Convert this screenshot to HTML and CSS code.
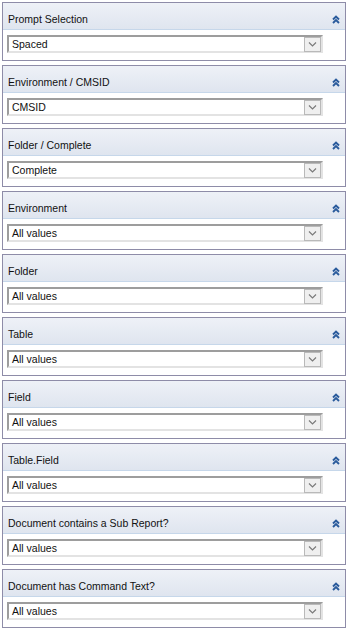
FILE: index.html
```html
<!DOCTYPE html>
<html lang="en">
<head>
  <meta charset="UTF-8">
  <title>Prompts</title>
  <link rel="stylesheet" href="styles.css">
</head>
<body>
  <div class="prompts">
    <div class="panel">
      <div class="panel-head"><span>Prompt Selection</span><svg class="collapse" viewBox="0 0 8 9"><path d="M1 4.5 L4 1.5 L7 4.5 M1 8 L4 5 L7 8"/></svg></div>
      <div class="panel-body"><div class="combo"><span>Spaced</span><i class="drop"><svg viewBox="0 0 9 5"><path d="M1 0.5 L4.5 4 L8 0.5"/></svg></i></div></div>
    </div>
    <div class="panel">
      <div class="panel-head"><span>Environment / CMSID</span><svg class="collapse" viewBox="0 0 8 9"><path d="M1 4.5 L4 1.5 L7 4.5 M1 8 L4 5 L7 8"/></svg></div>
      <div class="panel-body"><div class="combo"><span>CMSID</span><i class="drop"><svg viewBox="0 0 9 5"><path d="M1 0.5 L4.5 4 L8 0.5"/></svg></i></div></div>
    </div>
    <div class="panel">
      <div class="panel-head"><span>Folder / Complete</span><svg class="collapse" viewBox="0 0 8 9"><path d="M1 4.5 L4 1.5 L7 4.5 M1 8 L4 5 L7 8"/></svg></div>
      <div class="panel-body"><div class="combo"><span>Complete</span><i class="drop"><svg viewBox="0 0 9 5"><path d="M1 0.5 L4.5 4 L8 0.5"/></svg></i></div></div>
    </div>
    <div class="panel">
      <div class="panel-head"><span>Environment</span><svg class="collapse" viewBox="0 0 8 9"><path d="M1 4.5 L4 1.5 L7 4.5 M1 8 L4 5 L7 8"/></svg></div>
      <div class="panel-body"><div class="combo"><span>All values</span><i class="drop"><svg viewBox="0 0 9 5"><path d="M1 0.5 L4.5 4 L8 0.5"/></svg></i></div></div>
    </div>
    <div class="panel">
      <div class="panel-head"><span>Folder</span><svg class="collapse" viewBox="0 0 8 9"><path d="M1 4.5 L4 1.5 L7 4.5 M1 8 L4 5 L7 8"/></svg></div>
      <div class="panel-body"><div class="combo"><span>All values</span><i class="drop"><svg viewBox="0 0 9 5"><path d="M1 0.5 L4.5 4 L8 0.5"/></svg></i></div></div>
    </div>
    <div class="panel">
      <div class="panel-head"><span>Table</span><svg class="collapse" viewBox="0 0 8 9"><path d="M1 4.5 L4 1.5 L7 4.5 M1 8 L4 5 L7 8"/></svg></div>
      <div class="panel-body"><div class="combo"><span>All values</span><i class="drop"><svg viewBox="0 0 9 5"><path d="M1 0.5 L4.5 4 L8 0.5"/></svg></i></div></div>
    </div>
    <div class="panel">
      <div class="panel-head"><span>Field</span><svg class="collapse" viewBox="0 0 8 9"><path d="M1 4.5 L4 1.5 L7 4.5 M1 8 L4 5 L7 8"/></svg></div>
      <div class="panel-body"><div class="combo"><span>All values</span><i class="drop"><svg viewBox="0 0 9 5"><path d="M1 0.5 L4.5 4 L8 0.5"/></svg></i></div></div>
    </div>
    <div class="panel">
      <div class="panel-head"><span>Table.Field</span><svg class="collapse" viewBox="0 0 8 9"><path d="M1 4.5 L4 1.5 L7 4.5 M1 8 L4 5 L7 8"/></svg></div>
      <div class="panel-body"><div class="combo"><span>All values</span><i class="drop"><svg viewBox="0 0 9 5"><path d="M1 0.5 L4.5 4 L8 0.5"/></svg></i></div></div>
    </div>
    <div class="panel">
      <div class="panel-head"><span>Document contains a Sub Report?</span><svg class="collapse" viewBox="0 0 8 9"><path d="M1 4.5 L4 1.5 L7 4.5 M1 8 L4 5 L7 8"/></svg></div>
      <div class="panel-body"><div class="combo"><span>All values</span><i class="drop"><svg viewBox="0 0 9 5"><path d="M1 0.5 L4.5 4 L8 0.5"/></svg></i></div></div>
    </div>
    <div class="panel">
      <div class="panel-head"><span>Document has Command Text?</span><svg class="collapse" viewBox="0 0 8 9"><path d="M1 4.5 L4 1.5 L7 4.5 M1 8 L4 5 L7 8"/></svg></div>
      <div class="panel-body"><div class="combo"><span>All values</span><i class="drop"><svg viewBox="0 0 9 5"><path d="M1 0.5 L4.5 4 L8 0.5"/></svg></i></div></div>
    </div>
  </div>
</body>
</html>
```

FILE: styles.css
```css
body {
  margin: 0;
  background: #fff;
  font-family: "Liberation Sans", Arial, sans-serif;
  font-size: 10.5px;
  color: #111;
}
.prompts {
  display: flex;
  flex-direction: column;
  gap: 4px;
  padding: 2px 0 0 2px;
  width: 344px;
}
.panel {
  border: 1px solid #8e8ca8;
  height: 57px;
  display: flex;
  flex-direction: column;
}
.panel-head {
  height: 26px;
  background: linear-gradient(#eef1f7, #dfe5ef);
  border-bottom: 1px solid #c6d7ea;
  display: flex;
  align-items: center;
  justify-content: space-between;
  padding: 0 5px 0 5px;
}
.panel-head span {
  padding-top: 6px;
}
.collapse {
  width: 8px;
  height: 9px;
  margin-top: 6px;
  fill: none;
  stroke: #2a5b9c;
  stroke-width: 1.9;
}
.panel-body {
  flex: 1;
  background: #fff;
  padding: 5px 0 0 4px;
}
.combo {
  width: 312px;
  height: 14px;
  border-top: 2px solid #9d9d9d;
  border-left: 2px solid #9d9d9d;
  border-right: 2px solid #e3e3e3;
  border-bottom: 2px solid #e3e3e3;
  display: flex;
  align-items: center;
  justify-content: space-between;
  background: #fff;
}
.combo span {
  padding-left: 3px;
}
.drop {
  width: 15px;
  height: 13px;
  border: 1px solid #b9b9b9;
  background: #efefef;
  display: flex;
  align-items: center;
  justify-content: center;
}
.drop svg {
  width: 9px;
  height: 5px;
  fill: none;
  stroke: #7a7a7a;
  stroke-width: 1.2;
}
```
